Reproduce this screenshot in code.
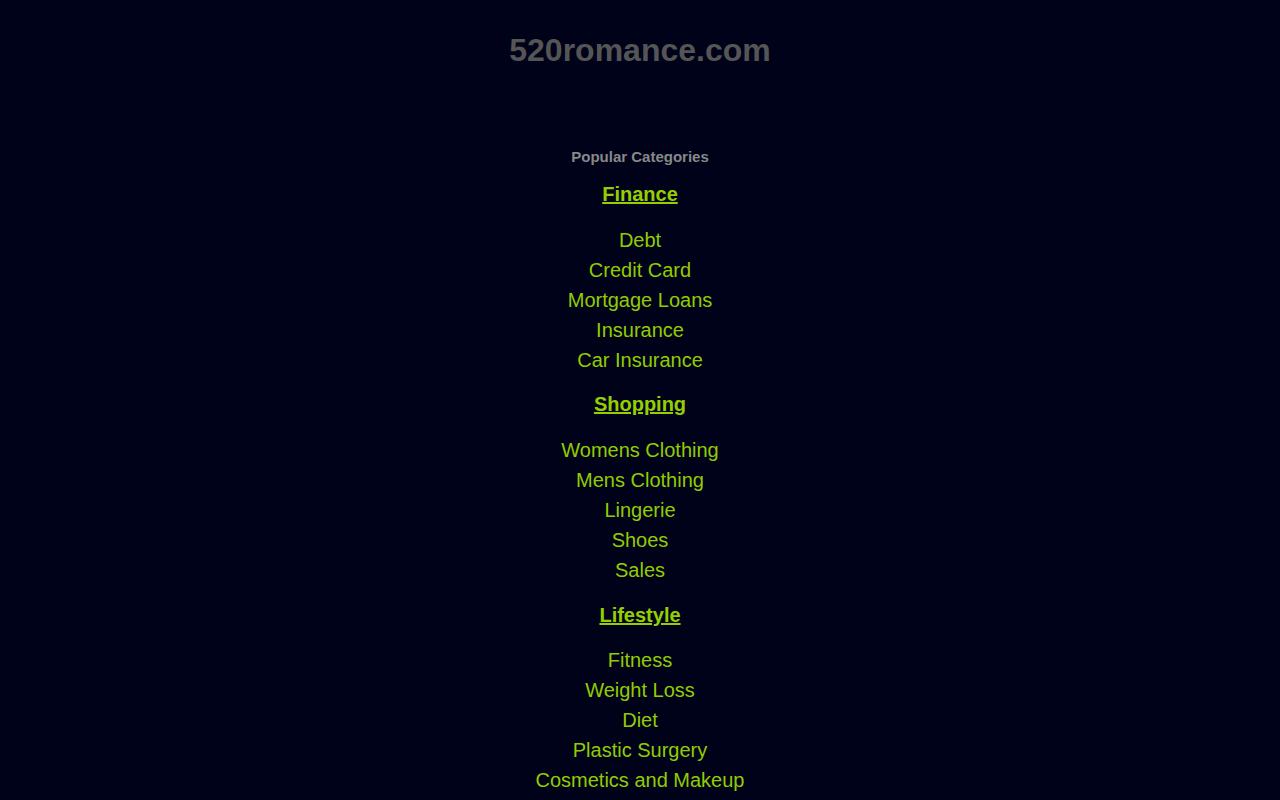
const CATEGORIES = [
  { name: 'Finance', items: ['Debt', 'Credit Card', 'Mortgage Loans', 'Insurance', 'Car Insurance'] },
  { name: 'Shopping', items: ['Womens Clothing', 'Mens Clothing', 'Lingerie', 'Shoes', 'Sales'] },
  { name: 'Lifestyle', items: ['Fitness', 'Weight Loss', 'Diet', 'Plastic Surgery', 'Cosmetics and Makeup'] },
]

export default function App() {
  return (
    <div className="min-h-screen bg-[#00021a] text-center font-['Liberation_Sans',Arial,sans-serif]">
      <h1 className="pt-[32px] text-[32px] leading-[36px] font-bold text-[#555555]">520romance.com</h1>

      <div className="mt-[74px]">
        <div className="text-[15px] leading-[30px] font-bold text-[#888888]">Popular Categories</div>

        {CATEGORIES.map((cat, i) => (
          <div key={cat.name} className={i === 0 ? 'mt-[7px]' : i === 1 ? 'mt-[14px]' : 'mt-[15px]'}>
            <a href="#" className="text-[20px] leading-[30px] font-bold underline text-[#95cf00]">{cat.name}</a>
            <ul className={i === 2 ? 'mt-[15px]' : 'mt-[16px]'}>
              {cat.items.map(item => (
                <li key={item} className="text-[20px] leading-[30px]">
                  <a href="#" className="text-[#92cc00]">{item}</a>
                </li>
              ))}
            </ul>
          </div>
        ))}
      </div>
    </div>
  )
}
